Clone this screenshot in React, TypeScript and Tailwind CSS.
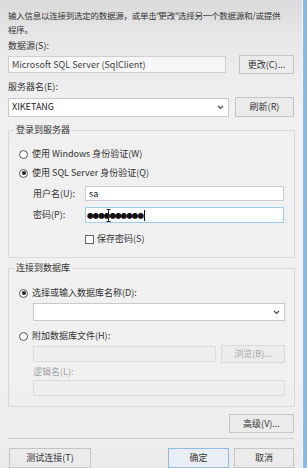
import React from "react";

const F = "font-['Noto_Sans_CJK_SC','Noto_Sans',sans-serif]";

function Btn({ children, w, h = 19, disabled = false, primary = false, cls = "" }: { children: React.ReactNode; w: number; h?: number; disabled?: boolean; primary?: boolean; cls?: string }) {
  return (
    <div
      className={`flex items-center justify-center border text-[9px] ${primary ? "border-[#8cbde3] bg-[#e8eef4]" : disabled ? "border-[#d9d9d9] bg-[#ececec] text-[#a8a8a8]" : "border-[#c4c4c4] bg-[#ebebeb] text-[#333]"} ${cls}`}
      style={{ width: w, height: h }}
    >
      {children}
    </div>
  );
}

function Chevron() {
  return (
    <svg width="7" height="5" viewBox="0 0 7 5" className="shrink-0">
      <path d="M1 1 L3.5 3.5 L6 1" fill="none" stroke="#444" strokeWidth="1.2" />
    </svg>
  );
}

function Radio({ checked }: { checked?: boolean }) {
  return (
    <div className="w-[9px] h-[9px] rounded-full border border-[#555] bg-white flex items-center justify-center shrink-0">
      {checked && <div className="w-[4px] h-[4px] rounded-full bg-[#222]" />}
    </div>
  );
}

export default function App() {
  return (
    <div className={`${F} w-[307px] h-[468px] overflow-hidden flex text-[#333] text-[9px] leading-[14px]`}>
      <div className="w-[302px] h-full bg-[linear-gradient(to_bottom,#dadada_0px,#e8e8e8_40px,#f0f0f0_110px,#f0f0f0_380px,#ebebeb_468px)] flex flex-col pl-[8px] pr-[7px] pt-[8px]">
        <div className="leading-[14px] text-[#333] whitespace-nowrap text-[8.5px] tracking-[-0.25px]">
          <div>
            输入信息以连接到选定的数据源，或单击<span className="tracking-[-2px]">"</span>更改<span className="tracking-[-1px]">"</span>选择另一个数据源和/或提供
          </div>
          <div>程序。</div>
        </div>
        <div className="mt-[3px] h-[14px]">数据源(S):</div>
        <div className="mt-[2px] flex items-center justify-between h-[19px]">
          <div className="w-[218px] h-[17px] border border-[#cfcfcf] bg-[#f6f6f6] flex items-center pl-[3px] text-[#444]">
            Microsoft SQL Server (SqlClient)
          </div>
          <Btn w={55} cls="mr-[1px]">更改(C)...</Btn>
        </div>
        <div className="mt-[6px] h-[14px]">服务器名(E):</div>
        <div className="mt-[3px] flex items-center justify-between h-[20px]">
          <div className="w-[221px] h-[19px] border border-[#c9c9c9] bg-white flex items-center justify-between pl-[3px] pr-[4px] text-[#222]">
            <span>XIKETANG</span>
            <Chevron />
          </div>
          <Btn w={59} h={20} cls="mr-[1px]">刷新(R)</Btn>
        </div>

        {/* Group 1 */}
        <div className="mt-[13px] relative border border-[#d9d9d9] h-[131px] pl-[10px] pr-[10px]">
          <div className="absolute left-[5px] top-[-8px] px-[2px] bg-[#eeeeee] leading-[14px]">登录到服务器</div>
          <div className="mt-[16px] flex items-center h-[14px]">
            <Radio />
            <span className="ml-[4px]">使用 Windows 身份验证(W)</span>
          </div>
          <div className="mt-[5px] flex items-center h-[14px]">
            <Radio checked />
            <span className="ml-[4px]">使用 SQL Server 身份验证(Q)</span>
          </div>
          <div className="mt-[6px] flex items-center h-[15px] pl-[14px]">
            <span className="w-[52px]">用户名(U):</span>
            <div className="w-[199px] h-[15px] border border-[#cccccc] bg-white flex items-center pl-[3px] text-[#222]">sa</div>
          </div>
          <div className="mt-[6px] flex items-center h-[16px] pl-[14px]">
            <span className="w-[52px]">密码(P):</span>
            <div className="relative w-[199px] h-[16px] border border-[#9fcbe8] bg-white flex items-center pl-[1px] text-[#111]">
              <span className="text-[6.5px] tracking-[-0.9px] leading-[10px]">●●●●●●●●●●</span>
              <span className="ml-[1px] w-[1px] h-[11px] bg-[#111]" />
              <svg className="absolute left-[20px] top-[1px]" width="5" height="13" viewBox="0 0 5 13">
                <path d="M0.5 0.5 H4.5 M2.5 0.5 V12.5 M0.5 12.5 H4.5" stroke="#222" strokeWidth="1" fill="none" />
              </svg>
            </div>
          </div>
          <div className="mt-[10px] flex items-center h-[12px] pl-[66px]">
            <div className="w-[9px] h-[9px] border border-[#666] bg-white" />
            <span className="ml-[3px]">保存密码(S)</span>
          </div>
        </div>

        {/* Group 2 */}
        <div className="mt-[10px] relative border border-[#d9d9d9] h-[142px] pl-[10px] pr-[10px]">
          <div className="absolute left-[5px] top-[-8px] px-[2px] bg-[#f0f0f0] leading-[14px]">连接到数据库</div>
          <div className="mt-[17px] flex items-center h-[14px]">
            <Radio checked />
            <span className="ml-[4px]">选择或输入数据库名称(D):</span>
          </div>
          <div className="mt-[3px] ml-[14px] w-[252px] h-[18px] border border-[#c9c9c9] bg-white flex items-center justify-end pr-[4px]">
            <Chevron />
          </div>
          <div className="mt-[8px] flex items-center h-[14px]">
            <Radio />
            <span className="ml-[4px]">附加数据库文件(H):</span>
          </div>
          <div className="mt-[2px] ml-[14px] flex items-center h-[18px] w-[252px] justify-between">
            <div className="w-[183px] h-[16px] border border-[#dcdcdc] bg-[#efefef]" />
            <Btn w={64} h={18} disabled>浏览(B)...</Btn>
          </div>
          <div className="mt-[2px] ml-[14px] h-[14px] text-[#a4a4a4]">逻辑名(L):</div>
          <div className="mt-[1px] ml-[14px] w-[252px] h-[16px] border border-[#dcdcdc] bg-[#efefef]" />
        </div>

        <div className="mt-[7px] flex justify-end">
          <Btn w={65} cls="mr-[1px]">高级(V)...</Btn>
        </div>
        <div className="mt-[5px] h-[1px] bg-[#cfcfcf] mr-[1px]" />
        <div className="mt-[9px] flex items-start">
          <Btn w={82} h={20} cls="ml-[1px]">测试连接(T)</Btn>
          <div className="flex-1" />
          <Btn w={61} h={20} primary>确定</Btn>
          <Btn w={60} h={20} cls="ml-[5px] mr-[1px]">取消</Btn>
        </div>
      </div>
      <div className="w-[1px] h-full bg-[#f8f8f8]" />
      <div className="w-[4px] h-full bg-[#86b9e6]" />
    </div>
  );
}
